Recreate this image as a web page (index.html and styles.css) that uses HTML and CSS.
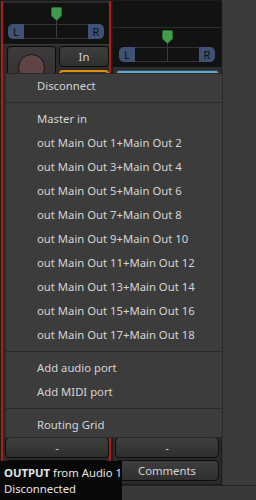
FILE: index.html
```html
<!DOCTYPE html>
<html lang="en">

<head>
  <meta charset="UTF-8">
  <link rel="stylesheet" href="styles.css">
</head>

<body>
  <div class="mixer">
    <!-- strip 1 (selected) -->
    <div class="strip sel">
      <div class="meter-top one">
        <div class="pan">
          <svg class="knob" width="11" height="14" viewBox="0 0 11 14"><path d="M1.5 .5h8a1 1 0 0 1 1 1v7.5l-5 4.5l-5-4.5v-7.5a1 1 0 0 1 1-1z" fill="#3f9c4b" stroke="#2a6a33"/></svg>
          <div class="panbar"><span class="lr">L</span><span class="mid"></span><span class="lr r">R</span></div>
        </div>
      </div>
      <div class="ctrls">
        <div class="rec"><span class="dot"></span></div>
        <div class="col">
          <div class="btn">In</div>
          <div class="btn disk">Disk</div>
        </div>
      </div>
      <div class="foot">
        <div class="btn small">-</div>
        <div class="btn">Comments</div>
      </div>
    </div>
    <!-- strip 2 -->
    <div class="strip">
      <div class="meter-top two"></div>
      <div class="pan-box">
        <div class="pan">
          <svg class="knob" width="11" height="14" viewBox="0 0 11 14"><path d="M1.5 .5h8a1 1 0 0 1 1 1v7.5l-5 4.5l-5-4.5v-7.5a1 1 0 0 1 1-1z" fill="#3f9c4b" stroke="#2a6a33"/></svg>
          <div class="panbar"><span class="lr">L</span><span class="mid"></span><span class="lr r">R</span></div>
        </div>
      </div>
      <div class="btn play">Playback</div>
      <div class="foot">
        <div class="btn small">-</div>
        <div class="btn">Comments</div>
      </div>
    </div>
    <div class="rest"></div>
  </div>
  <div class="bottom"></div>

  <!-- popup menu -->
  <ul class="menu">
    <li>Disconnect</li>
    <li class="sep"></li>
    <li>Master in</li>
    <li>out Main Out 1+Main Out 2</li>
    <li>out Main Out 3+Main Out 4</li>
    <li>out Main Out 5+Main Out 6</li>
    <li>out Main Out 7+Main Out 8</li>
    <li>out Main Out 9+Main Out 10</li>
    <li>out Main Out 11+Main Out 12</li>
    <li>out Main Out 13+Main Out 14</li>
    <li>out Main Out 15+Main Out 16</li>
    <li>out Main Out 17+Main Out 18</li>
    <li class="sep"></li>
    <li>Add audio port</li>
    <li>Add MIDI port</li>
    <li class="sep"></li>
    <li>Routing Grid</li>
  </ul>

  <div class="tip">
    <div><b>OUTPUT</b> from Audio 1</div>
    <div>Disconnected</div>
  </div>
</body>

</html>
```

FILE: styles.css
```css
body {
  margin: 0;
  width: 256px;
  height: 500px;
  overflow: hidden;
  background: #3b3b3b;
  font-family: "Noto Sans", "Open Sans", sans-serif;
  font-size: 11.3px;
  color: #d4d4d4;
  position: relative;
}

.mixer {
  display: flex;
  height: 485px;
}

.strip {
  width: 108px;
  border: 1px solid #1b1b1b;
  background: #2b2b2b;
  display: flex;
  flex-direction: column;
}

.strip.sel {
  width: 110px;
  box-shadow: inset 2px 0 #b41c1c, inset -2px 0 #b41c1c;
}

.rest {
  flex: 1;
  border-left: 1px solid #333;
}

.meter-top {
  background: #121212;
}

.meter-top.one {
  height: 37px;
  margin: 0 2px;
  padding-top: 4px;
  border-top: 2px solid #2c2c2c;
  border-bottom: 1px solid #3a3a3a;
}

.meter-top.two {
  height: 26px;
  border-bottom: 1px solid #2e2e2e;
}

.pan-box {
  background: #121212;
  height: 37px;
  padding-top: 2px;
  border-bottom: 1px solid #2e2e2e;
}

.pan {
  width: 96px;
  margin: 0 auto;
  display: flex;
  flex-direction: column;
  align-items: center;
  gap: 3px;
  background: linear-gradient(#3c3c3c, #3c3c3c) center / 1px 100% no-repeat;
}

.knob {
  display: block;
}

.panbar {
  width: 96px;
  height: 15px;
  display: flex;
  border-radius: 5px;
  overflow: hidden;
}

.lr {
  width: 16px;
  background: #405274;
  color: #0c0c14;
  font-size: 11px;
  line-height: 15px;
  text-align: center;
}

.mid {
  flex: 1;
  border-top: 1px solid #333;
  border-bottom: 1px solid #333;
  background: linear-gradient(#3c3c3c, #3c3c3c) center / 1px 100% no-repeat;
}

.btn {
  height: 19px;
  line-height: 19px;
  border: 1px solid #0d0d0d;
  border-radius: 4px;
  background: linear-gradient(#3e3e3e, #2f2f2f);
  color: #d4d4d4;
  text-align: center;
}

.ctrls {
  display: flex;
  gap: 3px;
  padding: 1px 2px 0 6px;
}

.rec {
  width: 47px;
  height: 44px;
  border: 1px solid #0d0d0d;
  border-radius: 4px;
  background: linear-gradient(#3d3a3a, #2f2d2d);
  display: flex;
  justify-content: center;
  padding-top: 7px;
}

.dot {
  width: 25px;
  height: 25px;
  border-radius: 50%;
  background: #5d4546;
  border: 1px solid #1a1212;
}

.col {
  flex: 1;
  display: flex;
  flex-direction: column;
  gap: 3px;
}

.btn.disk {
  border: 2px solid #e48c00;
  background: #333;
}

.btn.play {
  margin: 2px 2px 0 3px;
  background: #67a7c9;
  border-color: #2a4858;
  color: #111;
  border-radius: 3px;
}

.foot {
  margin-top: auto;
  display: flex;
  flex-direction: column;
  gap: 2px;
  padding: 0 2px 3px 4px;
}

.strip:not(.sel) .foot {
  padding: 0 2px 3px 2px;
}

.bottom {
  border-top: 1px solid #222;
  height: 14px;
  background: #393939;
}

.menu {
  position: absolute;
  left: 5px;
  top: 73px;
  width: 216px;
  margin: 0;
  padding: 0;
  list-style: none;
  background: #3c3c3c;
  border: 1px solid #2a2a2a;
}

.menu li {
  height: 24px;
  line-height: 24px;
  padding-left: 31px;
  white-space: nowrap;
}

.menu li.sep {
  height: 9px;
  padding: 0;
  background: linear-gradient(#2a2a2a, #2a2a2a) 0 4px / 100% 1px no-repeat;
}

.tip {
  position: absolute;
  left: 0;
  top: 461px;
  width: 118px;
  height: 35px;
  padding: 4px 0 0 4px;
  background: #080808;
  color: #e4e4e4;
  line-height: 16px;
  white-space: nowrap;
}
```
